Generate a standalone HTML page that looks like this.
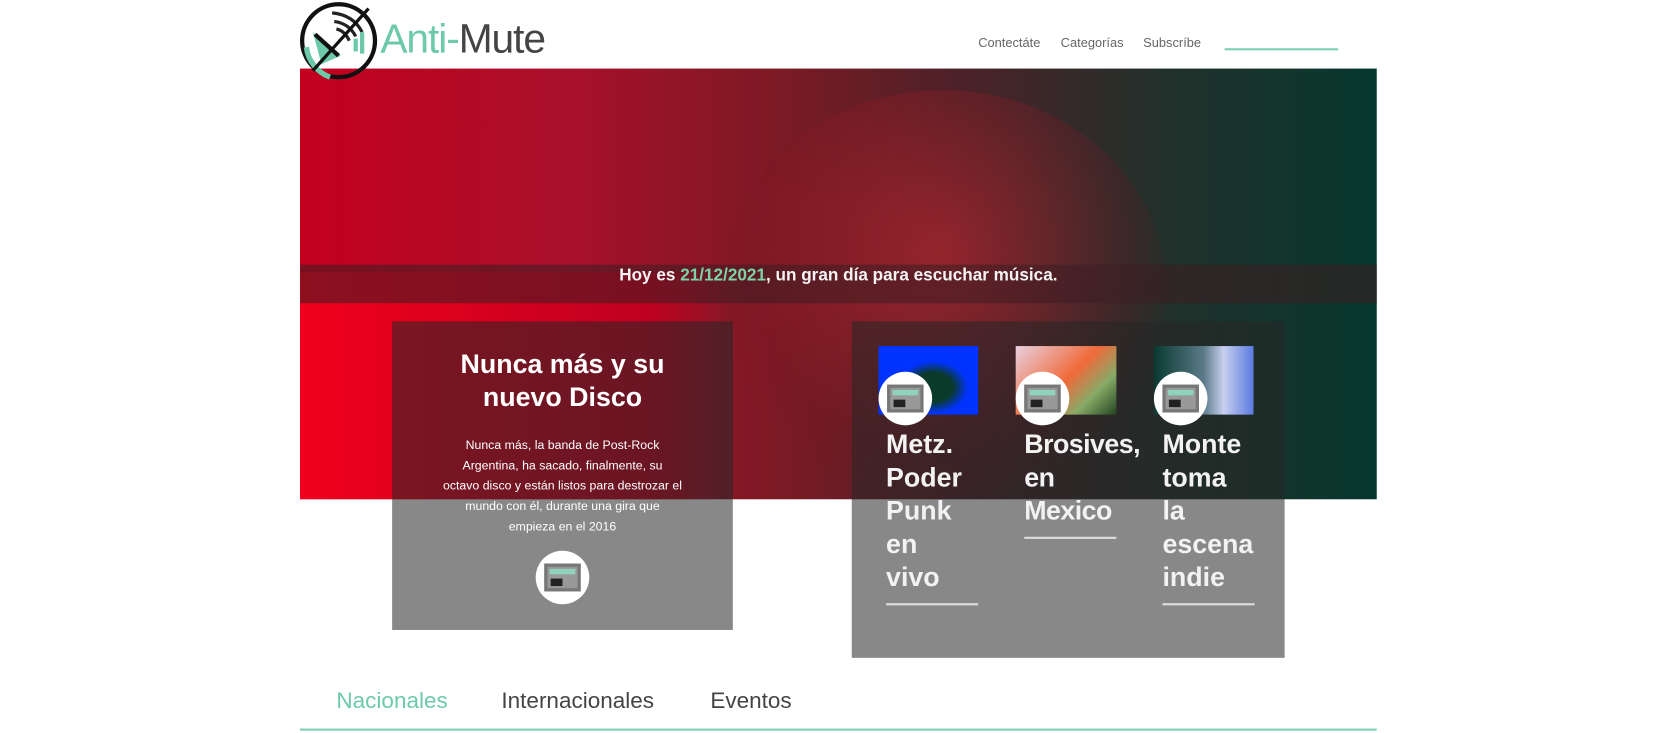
<!DOCTYPE html>
<html><head><meta charset="utf-8"><style>
*{margin:0;padding:0;box-sizing:border-box}
body{width:1680px;height:733px;background:#fff;font-family:"Liberation Sans",sans-serif;overflow:hidden}
#w{position:relative;width:1568px;height:684px;transform:scale(1.0714);transform-origin:0 0}
.abs{position:absolute}
.hero{left:280px;top:64px;width:1005px;height:402px;background:linear-gradient(90deg,#c4001f 0%,#a8102a 25%,#7a1a24 45%,#4a2228 62%,#22302b 80%,#06382d 100%);overflow:hidden}
.hero:before{content:"";position:absolute;left:0;top:190px;width:400px;height:212px;background:linear-gradient(90deg,#f0001c,#c00020 80%,transparent)}
.hero .face{position:absolute;left:390px;top:20px;width:420px;height:380px;border-radius:50%;background:radial-gradient(ellipse at 50% 40%,rgba(230,40,50,.45),rgba(120,20,30,.2) 60%,transparent 75%)}
.band{left:280px;top:247px;width:1005px;height:36px;background:rgba(60,30,35,.55);color:#f3f3f3;font-weight:bold;font-size:16px;text-align:center;line-height:22px}
.card{background:rgba(38,38,38,.55);color:#fff;text-align:center}
.ic{width:50px;height:50px;border-radius:50%;background:#fff;display:flex;align-items:center;justify-content:center}
.ic div{width:34px;height:26px;border:3px solid #777;background:#999;position:relative}
.ic div:before{content:"";position:absolute;left:2px;top:2px;width:24px;height:5px;background:#8fd3bb}
.ic div:after{content:"";position:absolute;left:3px;top:11px;width:11px;height:7px;background:#222}
.t{color:#f2f2f2;font-weight:bold;font-size:25px;line-height:31px}
.ul{height:2px;background:#ddd;width:86px}
.nav{top:33px;font-size:12px;color:#666}
.tab{top:643px;font-size:21px;color:#444}
</style></head><body><div id="w">
<div class="abs hero"><div class="face"></div></div>
<div class="abs band">Hoy es <span style="color:#7fd1a8">21/12/2021</span>, un gran día para escuchar música.</div>

<svg class="abs" style="left:278px;top:0" width="78" height="78" viewBox="0 0 78 78">
<circle cx="38" cy="38" r="34" fill="none" stroke="#111" stroke-width="4"/>
<path d="M8 44 A34 34 0 0 0 30 72" stroke="#6ccaa8" stroke-width="5" fill="none"/>
<path d="M14 30 L40 52 L22 60 Z" fill="#6ccaa8"/>
<path d="M16 32 L38 52" stroke="#111" stroke-width="4"/>
<path d="M32 12 Q52 14 60 30 M34 20 Q48 22 54 34 M36 27 Q44 29 48 38" stroke="#222" stroke-width="3" fill="none"/>
<path d="M60 30 L60 50 M54 36 L54 48" stroke="#6ccaa8" stroke-width="4"/>
<path d="M66 8 L14 66" stroke="#111" stroke-width="3"/>
</svg>
<div class="abs" style="left:355px;top:16px;font-size:38px;color:#6ccaa8;letter-spacing:-1px">Anti-<span style="color:#444">Mute</span></div>

<div class="abs nav" style="left:913px">Contectáte</div>
<div class="abs nav" style="left:990px">Categorías</div>
<div class="abs nav" style="left:1067px">Subscríbe</div>
<div class="abs" style="left:1143px;top:45px;width:106px;height:2px;background:#7fd1b5"></div>

<div class="abs card" style="left:366px;top:300px;width:318px;height:288px">
<div style="margin-top:25px;font-size:25px;font-weight:bold;line-height:31px">Nunca más y su<br>nuevo Disco</div>
<div style="margin:20px 10px 0;font-size:11.5px;line-height:19px;white-space:nowrap">Nunca más, la banda de Post-Rock<br>Argentina, ha sacado, finalmente, su<br>octavo disco y están listos para destrozar el<br>mundo con él, durante una gira que<br>empieza en el 2016</div>
<div class="ic" style="margin:12px auto 0"><div></div></div>
</div>

<div class="abs card" style="left:795px;top:300px;width:404px;height:314px"></div>
<div class="abs" style="left:820px;top:323px;width:93px;height:64px;background:radial-gradient(ellipse at 55% 60%,#0a3a2a 25%,#0033ff 45%)"></div>
<div class="abs" style="left:948px;top:323px;width:94px;height:64px;background:linear-gradient(135deg,#e8d0e0,#f06a3a 50%,#88aa66 75%,#224422)"></div>
<div class="abs" style="left:1077px;top:323px;width:93px;height:64px;background:linear-gradient(90deg,#0a3a30,#5a7a88 50%,#c8d0f0 70%,#5a7ae0)"></div>
<div class="abs ic" style="left:820px;top:347px"><div></div></div>
<div class="abs ic" style="left:948px;top:347px"><div></div></div>
<div class="abs ic" style="left:1077px;top:347px"><div></div></div>
<div class="abs t" style="left:827px;top:400px">Metz.<br>Poder<br>Punk<br>en<br>vivo</div>
<div class="abs ul" style="left:827px;top:563px"></div>
<div class="abs t" style="left:956px;top:400px;letter-spacing:-.5px">Brosives,<br>en<br>Mexico</div>
<div class="abs ul" style="left:956px;top:501px"></div>
<div class="abs t" style="left:1085px;top:400px">Monte<br>toma<br>la<br>escena<br>indie</div>
<div class="abs ul" style="left:1085px;top:563px"></div>

<div class="abs tab" style="left:314px;color:#6ccaa8">Nacionales</div>
<div class="abs tab" style="left:468px">Internacionales</div>
<div class="abs tab" style="left:663px">Eventos</div>
<div class="abs" style="left:280px;top:680px;width:1005px;height:2px;background:#7fd1b5"></div>
</div></body></html>
